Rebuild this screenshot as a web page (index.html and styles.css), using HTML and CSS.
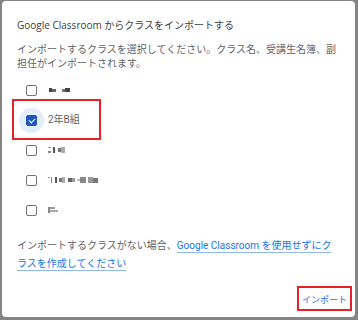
FILE: index.html
```html
<!DOCTYPE html>
<html lang="ja">
<head>
    <meta charset="UTF-8">
    <meta name="viewport" content="width=device-width, initial-scale=1.0">
    <title>Google Classroom からクラスをインポートする</title>
    <link rel="stylesheet" href="styles.css">
</head>
<body>
    <div class="dialog">
        <h1 class="title"><span class="latin">Google Classroom</span> からクラスをインポートする</h1>
        <p class="desc">インポートするクラスを選択してください。クラス名、受講生名簿、副担任がインポートされます。</p>

        <ul class="class-list">
            <li class="class-row">
                <span class="cb-wrap"><span class="cb"></span></span>
                <span class="name">
                    <svg width="24" height="8" viewBox="0 0 24 8">
                        <rect x="1" y="2" width="3" height="4" fill="#444"/>
                        <rect x="4" y="3" width="4" height="3" fill="#666"/>
                        <rect x="14" y="3" width="3" height="3" fill="#777"/>
                        <rect x="17" y="2" width="5" height="4" fill="#444"/>
                    </svg>
                </span>
            </li>
            <li class="class-row is-checked">
                <span class="cb-wrap"><span class="cb"></span></span>
                <span class="name">2年B組</span>
            </li>
            <li class="class-row">
                <span class="cb-wrap"><span class="cb"></span></span>
                <span class="name">
                    <svg width="24" height="8" viewBox="0 0 24 8">
                        <rect x="0" y="1" width="3" height="1" fill="#999"/>
                        <rect x="0" y="5" width="3" height="2" fill="#888"/>
                        <rect x="5" y="1" width="2" height="6" fill="#555"/>
                        <rect x="10" y="2" width="3" height="4" fill="#777"/>
                        <rect x="13" y="1" width="4" height="6" fill="#aaa"/>
                    </svg>
                </span>
            </li>
            <li class="class-row">
                <span class="cb-wrap"><span class="cb"></span></span>
                <span class="name">
                    <svg width="54" height="8" viewBox="0 0 54 8">
                        <rect x="0" y="1" width="2" height="1" fill="#999"/>
                        <rect x="3" y="1" width="1" height="6" fill="#888"/>
                        <rect x="7" y="1" width="2" height="6" fill="#555"/>
                        <rect x="11" y="2" width="3" height="4" fill="#777"/>
                        <rect x="14" y="1" width="3" height="6" fill="#aaa"/>
                        <rect x="20" y="2" width="4" height="4" fill="#666"/>
                        <rect x="24" y="2" width="3" height="4" fill="#999"/>
                        <rect x="29" y="3" width="3" height="2" fill="#bbb"/>
                        <rect x="32" y="1" width="6" height="6" fill="#888"/>
                        <rect x="40" y="1" width="5" height="6" fill="#999"/>
                        <rect x="45" y="2" width="5" height="5" fill="#777"/>
                    </svg>
                </span>
            </li>
            <li class="class-row">
                <span class="cb-wrap"><span class="cb"></span></span>
                <span class="name">
                    <svg width="14" height="8" viewBox="0 0 14 8">
                        <rect x="0" y="1" width="2" height="6" fill="#888"/>
                        <rect x="2" y="1" width="5" height="2" fill="#999"/>
                        <rect x="2" y="4" width="8" height="2" fill="#aaa"/>
                    </svg>
                </span>
            </li>
        </ul>

        <p class="note">インポートするクラスがない場合、<a href="#">Google Classroom を使用せずにクラスを作成してください</a></p>

        <div class="actions">
            <button type="button" class="btn-text">インポート</button>
        </div>
    </div>
</body>
</html>
```

FILE: styles.css
```css
:root {
    --backdrop: #858585;
    --title: #3c4043;
    --text: #5f6368;
    --blue: #1a73e8;
    --check: #1f55bd;
    --mark: #e8202a;
}

* {
    margin: 0;
    padding: 0;
    box-sizing: border-box;
}

body {
    background: var(--backdrop);
    font-family: Roboto, "Noto Sans CJK JP", sans-serif;
    color: var(--text);
    height: 320px;
    overflow: hidden;
}

.dialog {
    margin: 1px 3px 3px 2px;
    height: 316px;
    background: #fff;
    border-radius: 4px;
    padding: 17px 16px 0 15px;
    display: flex;
    flex-direction: column;
    position: relative;
}

.title {
    font-size: 10px;
    font-weight: 400;
    line-height: 14px;
    color: var(--title);
}

.title .latin {
    font-family: "Open Sans", sans-serif;
}

.desc {
    margin-top: 10px;
    font-size: 10px;
    line-height: 14px;
}

.class-list {
    list-style: none;
    margin-top: 4px;
}

.class-row {
    display: flex;
    align-items: center;
    height: 30px;
    position: relative;
}

.cb-wrap {
    width: 25px;
    height: 25px;
    margin-left: 2px;
    border-radius: 50%;
    display: flex;
    align-items: center;
    justify-content: center;
}

.cb {
    width: 11px;
    height: 11px;
    border: 1.5px solid #6f7378;
    border-radius: 2px;
}

.name {
    margin-left: 4px;
    font-size: 10px;
    line-height: 14px;
    display: flex;
    align-items: center;
}

.is-checked .cb-wrap {
    background: #e4edfb;
}

.is-checked .cb {
    background: var(--check);
    border-color: var(--check);
    position: relative;
}

.is-checked .cb::after {
    content: "";
    position: absolute;
    left: 2px;
    top: 0px;
    width: 5px;
    height: 3px;
    border-left: 1.3px solid #fff;
    border-bottom: 1.3px solid #fff;
    transform: translate(0, 2px) rotate(-45deg);
}

/* red annotation box over the selected row */
.is-checked::after {
    content: "";
    position: absolute;
    left: -5px;
    top: -6px;
    width: 85px;
    height: 37px;
    border: 2px solid var(--mark);
}

.note {
    margin-top: 12px;
    font-size: 10px;
    line-height: 17.5px;
}

.note a {
    color: var(--blue);
    text-decoration: underline;
    text-decoration-color: #8fb8f2;
    text-underline-offset: 3px;
}

.actions {
    margin: auto -13px 6px 0;
    display: flex;
    justify-content: flex-end;
}

.btn-text {
    height: 25px;
    width: 55px;
    border: 2px solid var(--mark);
    background: #fff;
    color: var(--blue);
    font-family: Roboto, "Noto Sans CJK JP", sans-serif;
    font-size: 9px;
    font-weight: 400;
    padding-top: 2px;
    cursor: pointer;
}
```
